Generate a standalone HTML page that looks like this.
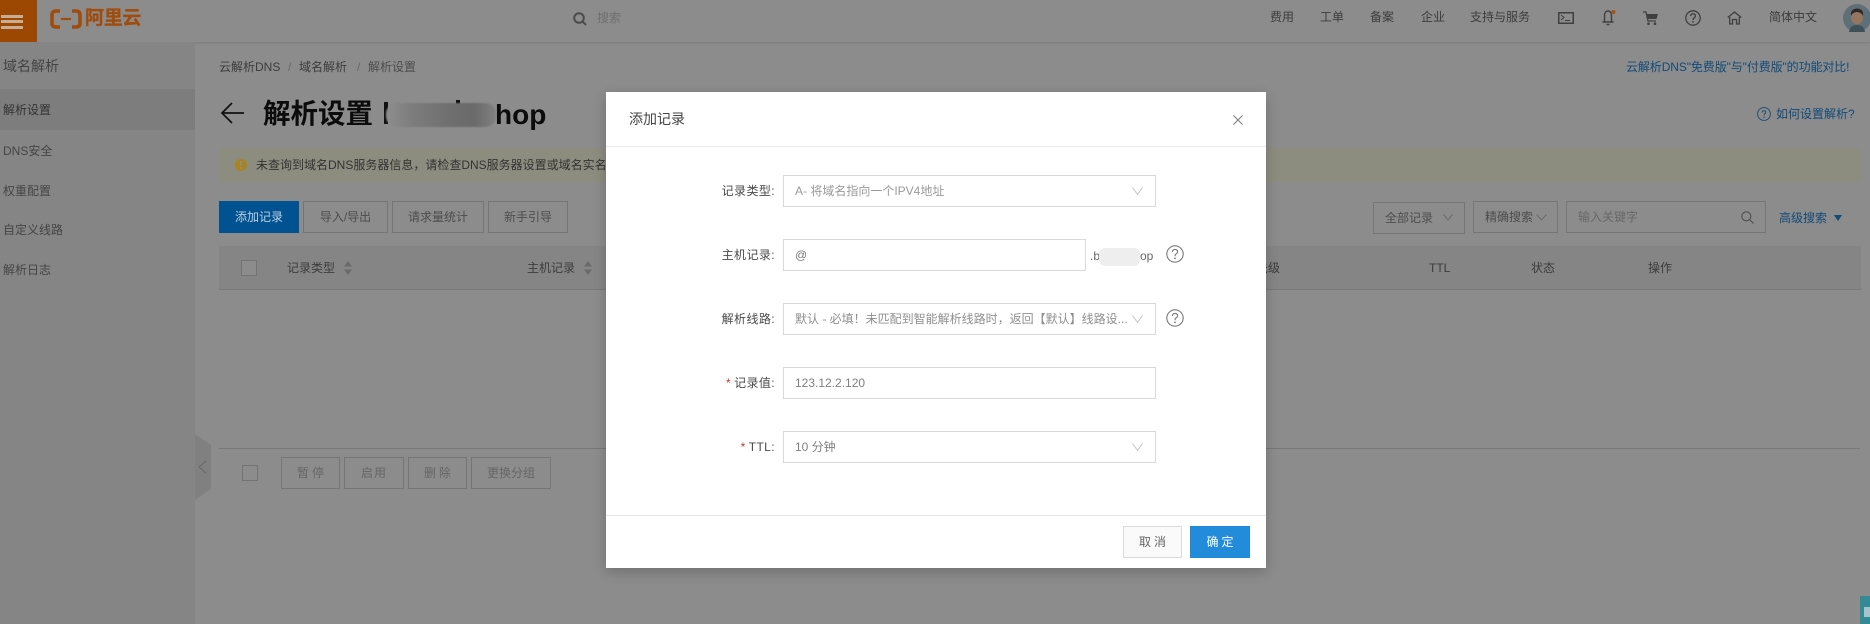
<!DOCTYPE html>
<html lang="zh">
<head>
<meta charset="utf-8">
<title>解析设置</title>
<style>
html,body{margin:0;padding:0;width:1870px;height:624px;overflow:hidden;background:#8c8c8c}
body{position:relative;font-family:"Liberation Sans","Noto Sans CJK SC",sans-serif;font-size:12px;color:#3c3c3c}
.a,.t,.b{position:absolute;box-sizing:border-box}
.t{white-space:nowrap;line-height:20px;height:20px}
.b{border:1px solid #757575;text-align:center;line-height:30px;height:32px;color:#4d4d4d;white-space:nowrap}
.f{position:absolute;box-sizing:border-box;height:32px;border:1px solid #d9d9d9;background:#fff;left:783px;width:373px;line-height:30px;padding-left:11px;color:#9a9a9a;white-space:nowrap;overflow:hidden}
.l{position:absolute;right:1095px;text-align:right;line-height:20px;height:20px;white-space:nowrap;color:#4a4a4a;letter-spacing:.4px}
.l i{font-style:normal;color:#c0392b;margin-right:3px}
svg{position:absolute;overflow:visible}
</style>
</head>
<body>
<!-- top bar -->
<div class="a" style="left:0;top:0;width:1870px;height:42px;background:#8c8c8c;box-shadow:0 1px 2px rgba(0,0,0,.1)"></div>
<div class="a" style="left:0;top:0;width:37px;height:42px;background:#9c4802"></div>
<div class="a" style="left:1px;top:15px;width:22px;height:3px;background:#c9ae96"></div>
<div class="a" style="left:1px;top:20px;width:22px;height:3px;background:#c9ae96"></div>
<div class="a" style="left:1px;top:26px;width:22px;height:3px;background:#c9ae96"></div>
<svg style="left:50px;top:9px" width="32" height="20" viewBox="0 0 32 20"><path d="M10 2H6Q2 2 2 6V14Q2 18 6 18H10M22 2H26Q30 2 30 6V14Q30 18 26 18H22" fill="none" stroke="#a04c0c" stroke-width="3.6"/><path d="M11 10H21" stroke="#a04c0c" stroke-width="2.2"/></svg>
<div class="t" style="left:85px;top:9px;font-size:19px;line-height:20px;font-weight:700;color:#a04c0c;letter-spacing:-.3px;-webkit-text-stroke:.3px #a04c0c">阿里云</div>
<svg style="left:573px;top:12px" width="14" height="14" viewBox="0 0 14 14"><circle cx="6" cy="6" r="4.8" fill="none" stroke="#4c4c4c" stroke-width="2"/><path d="M9.5 9.5L13 13" stroke="#4c4c4c" stroke-width="2"/></svg>
<div class="t" style="left:597px;top:8px;color:#6f6f6f">搜索</div>
<div class="t" style="left:1270px;top:7px">费用</div>
<div class="t" style="left:1320px;top:7px">工单</div>
<div class="t" style="left:1370px;top:7px">备案</div>
<div class="t" style="left:1421px;top:7px">企业</div>
<div class="t" style="left:1470px;top:7px">支持与服务</div>
<svg style="left:1558px;top:12px" width="16" height="12" viewBox="0 0 16 12"><rect x=".75" y=".75" width="14.5" height="10.5" fill="none" stroke="#3f3f3f" stroke-width="1.5"/><path d="M3 3L6 5.5L3 8M7 8.5H12" fill="none" stroke="#3f3f3f" stroke-width="1"/></svg>
<svg style="left:1602px;top:9px" width="14" height="17" viewBox="0 0 14 17"><path d="M2.5 12.5V7Q2.5 2 6 2Q9.5 2 9.5 7V12.5M.5 13H11.5" fill="none" stroke="#3f3f3f" stroke-width="1.4"/><path d="M4.5 15.5H7.5" stroke="#3f3f3f" stroke-width="1.4"/><circle cx="11.5" cy="3" r="2" fill="#a85210"/></svg>
<svg style="left:1643px;top:11px" width="16" height="15" viewBox="0 0 16 15"><path d="M0 1H3L5 10H13" fill="none" stroke="#3f3f3f" stroke-width="1.3"/><path d="M3.6 3H15L13.5 8H4.6Z" fill="#3f3f3f"/><circle cx="5.5" cy="12.7" r="1.3" fill="#3f3f3f"/><circle cx="12" cy="12.7" r="1.3" fill="#3f3f3f"/></svg>
<svg style="left:1685px;top:10px" width="16" height="16" viewBox="0 0 16 16"><circle cx="8" cy="8" r="7.2" fill="none" stroke="#3f3f3f" stroke-width="1.3"/><path d="M5.6 6.2Q5.8 3.9 8 3.9Q10.4 3.9 10.4 6Q10.4 7.2 9 8Q8 8.6 8 10" fill="none" stroke="#3f3f3f" stroke-width="1.3"/><circle cx="8" cy="11.9" r=".9" fill="#3f3f3f"/></svg>
<svg style="left:1727px;top:11px" width="15" height="14" viewBox="0 0 15 14"><path d="M.7 6.5L7.5 1L14.3 6.5M2.7 6V13H5.5V8.5H9.5V13H12.3V6" fill="none" stroke="#3f3f3f" stroke-width="1.3"/></svg>
<div class="t" style="left:1769px;top:7px">简体中文</div>
<svg style="left:1843px;top:4px" width="28" height="28" viewBox="0 0 28 28"><circle cx="14" cy="14" r="14" fill="#5f6f78"/><ellipse cx="14" cy="13" rx="6" ry="7.5" fill="#94755f"/><path d="M8 12Q7 5 14 4.5Q21 5 20 12Q18 8 14 8Q10 8 8 12Z" fill="#2e2a28"/><path d="M6 28Q7 21 14 21Q21 21 22 28Z" fill="#3f4f58"/></svg>

<!-- sidebar -->
<div class="a" style="left:0;top:42px;width:195px;height:582px;background:#858585"></div>
<div class="a" style="left:0;top:89px;width:195px;height:41px;background:#7d7d7d"></div>
<div class="t" style="left:3px;top:56px;font-size:14px;color:#444">域名解析</div>
<div class="t" style="left:3px;top:100px;color:#333">解析设置</div>
<div class="t" style="left:3px;top:141px;color:#454545">DNS安全</div>
<div class="t" style="left:3px;top:181px;color:#454545">权重配置</div>
<div class="t" style="left:3px;top:220px;color:#454545">自定义线路</div>
<div class="t" style="left:3px;top:260px;color:#454545">解析日志</div>
<svg style="left:195px;top:434px" width="16" height="66" viewBox="0 0 16 66"><path d="M0 0L16 11V55L0 66Z" fill="#808080"/><path d="M11 27L4 33L11 39" fill="none" stroke="#666" stroke-width="1"/></svg>

<!-- breadcrumb -->
<div class="t" style="left:219px;top:57px">云解析DNS</div>
<div class="t" style="left:288px;top:57px;color:#6a6a6a">/</div>
<div class="t" style="left:299px;top:57px">域名解析</div>
<div class="t" style="left:357px;top:57px;color:#6a6a6a">/</div>
<div class="t" style="left:368px;top:57px;color:#4d4d4d">解析设置</div>
<div class="t" style="left:1626px;top:57px;color:#124a78;letter-spacing:-.1px">云解析DNS"免费版"与"付费版"的功能对比!</div>

<!-- title -->
<svg style="left:220px;top:101px" width="25" height="24" viewBox="0 0 25 24"><path d="M12 2L2 12L12 22M2 12H24" fill="none" stroke="#111" stroke-width="1.7"/></svg>
<div class="t" style="left:263px;top:96px;height:36px;line-height:36px;font-size:27.5px;font-weight:700;color:#0c0c0c">解析设置</div>
<div class="a" style="left:384px;top:102px;width:4px;height:22px;background:#111"></div>
<div class="a" style="left:456px;top:100px;width:4px;height:6px;background:#111"></div>
<div class="a" style="left:386px;top:103px;width:110px;height:24px;border-radius:11px;background:linear-gradient(90deg,#8e8e8e 0%,#7c7c7c 25%,#6e6e6e 60%,#6a6a6a 80%,#808080 100%);filter:blur(.8px)"></div>
<div class="t" style="left:495px;top:97px;height:36px;line-height:36px;font-size:28px;font-weight:700;color:#0c0c0c">hop</div>
<svg style="left:1757px;top:107px" width="14" height="14" viewBox="0 0 14 14"><circle cx="7" cy="7" r="6.4" fill="none" stroke="#174a70" stroke-width=".9"/><path d="M5.2 5.4Q5.4 3.7 7 3.7Q8.8 3.7 8.8 5.2Q8.8 6.2 7.7 6.8Q7 7.3 7 8.5" fill="none" stroke="#174a70" stroke-width=".9"/><circle cx="7" cy="10.3" r=".7" fill="#174a70"/></svg>
<div class="t" style="left:1776px;top:104px;color:#124a78">如何设置解析?</div>

<!-- alert -->
<div class="a" style="left:219px;top:148px;width:1642px;height:34px;background:#8c8c7f"></div>
<div class="a" style="left:235px;top:159px;width:12px;height:12px;border-radius:50%;background:#a88420"></div>
<div class="a" style="left:240px;top:161px;width:2px;height:5px;background:#8c8c7f"></div>
<div class="a" style="left:240px;top:167px;width:2px;height:2px;background:#8c8c7f"></div>
<div class="t" style="left:256px;top:155px;color:#333">未查询到域名DNS服务器信息，请检查DNS服务器设置或域名实名认证信息</div>

<!-- actions -->
<div class="b" style="left:219px;top:201px;width:80px;background:#005291;border-color:#005291;color:#b9cfe0">添加记录</div>
<div class="b" style="left:303px;top:201px;width:85px">导入/导出</div>
<div class="b" style="left:392px;top:201px;width:92px">请求量统计</div>
<div class="b" style="left:488px;top:201px;width:80px">新手引导</div>

<div class="b" style="left:1373px;top:202px;width:92px;text-align:left;padding-left:11px;line-height:31px">全部记录</div>
<svg style="left:1443px;top:214px" width="10" height="7" viewBox="0 0 10 7"><path d="M.5 .5L5 6L9.5 .5" fill="none" stroke="#6a6a6a"/></svg>
<div class="b" style="left:1473px;top:201px;width:85px;text-align:left;padding-left:11px">精确搜索</div>
<svg style="left:1536px;top:214px" width="11" height="7" viewBox="0 0 11 7"><path d="M.5 .5L5.5 6L10.5 .5" fill="none" stroke="#6a6a6a"/></svg>
<div class="b" style="left:1566px;top:201px;width:200px;text-align:left;padding-left:11px;color:#686868">输入关键字</div>
<svg style="left:1741px;top:211px" width="13" height="13" viewBox="0 0 13 13"><circle cx="5.3" cy="5.3" r="4.5" fill="none" stroke="#4d4d4d" stroke-width="1.1"/><path d="M8.6 8.6L12.5 12.5" stroke="#4d4d4d" stroke-width="1.1"/></svg>
<div class="t" style="left:1779px;top:208px;color:#124a78">高级搜索</div>
<svg style="left:1834px;top:215px" width="8" height="6" viewBox="0 0 8 6"><path d="M0 0H8L4 6Z" fill="#124a78"/></svg>

<!-- table head -->
<div class="a" style="left:219px;top:246px;width:1642px;height:44px;background:#858585;border-bottom:1px solid #787878"></div>
<div class="a" style="left:241px;top:260px;width:16px;height:16px;border:1px solid #737373;background:#8c8c8c"></div>
<div class="t" style="left:287px;top:258px">记录类型</div>
<svg style="left:344px;top:261px" width="8" height="14" viewBox="0 0 8 14"><path d="M0 5.5L4 0L8 5.5ZM0 8.5H8L4 14Z" fill="#6a6a6a"/></svg>
<div class="t" style="left:527px;top:258px">主机记录</div>
<svg style="left:584px;top:261px" width="8" height="14" viewBox="0 0 8 14"><path d="M0 5.5L4 0L8 5.5ZM0 8.5H8L4 14Z" fill="#6a6a6a"/></svg>
<div class="t" style="left:1244px;top:258px">优先级</div>
<div class="t" style="left:1429px;top:258px">TTL</div>
<div class="t" style="left:1531px;top:258px">状态</div>
<div class="t" style="left:1648px;top:258px">操作</div>

<!-- table foot -->
<div class="a" style="left:219px;top:448px;width:1641px;height:1px;background:#787878"></div>
<div class="a" style="left:242px;top:465px;width:16px;height:16px;border:1px solid #737373;background:#8c8c8c"></div>
<div class="b" style="left:281px;top:457px;width:59px;color:#666;letter-spacing:3px;text-indent:3px">暂停</div>
<div class="b" style="left:344px;top:457px;width:60px;color:#666;letter-spacing:1px">启用</div>
<div class="b" style="left:408px;top:457px;width:59px;color:#666;letter-spacing:3px;text-indent:3px">删除</div>
<div class="b" style="left:471px;top:457px;width:80px;color:#666">更换分组</div>

<div class="a" style="left:1860px;top:596px;width:10px;height:28px;background:#338a95"></div>
<div class="a" style="left:1864px;top:607px;width:6px;height:10px;background:#a7c4c8"></div>

<!-- modal -->
<div class="a" style="left:606px;top:92px;width:660px;height:476px;background:#fff;box-shadow:0 4px 12px rgba(0,0,0,.2)">
</div>
<div class="t" style="left:629px;top:109px;font-size:14px;color:#444">添加记录</div>
<svg style="left:1233px;top:115px" width="10" height="10" viewBox="0 0 10 10"><path d="M.5 .5L9.5 9.5M9.5 .5L.5 9.5" stroke="#7a7a7a" fill="none"/></svg>
<div class="a" style="left:606px;top:146px;width:660px;height:1px;background:#e6eaea"></div>

<div class="l" style="top:181px">记录类型:</div>
<div class="f" style="top:175px">A- 将域名指向一个IPV4地址</div>
<svg style="left:1132px;top:187px" width="11" height="8" viewBox="0 0 11 8"><path d="M.5 .5L5.5 7.5L10.5 .5" fill="none" stroke="#c6c6c6"/></svg>

<div class="l" style="top:245px">主机记录:</div>
<div class="f" style="top:239px;width:303px;color:#777">@</div>
<div class="t" style="left:1090px;top:246px;color:#666">.b</div>
<div class="t" style="left:1140px;top:246px;color:#666">op</div>
<div class="a" style="left:1099px;top:248px;width:41px;height:18px;border-radius:6px;background:#eee"></div>
<svg style="left:1166px;top:245px" width="18" height="18" viewBox="0 0 18 18"><circle cx="9" cy="9" r="8.2" fill="none" stroke="#777" stroke-width="1.1"/><path d="M6.4 7Q6.6 4.4 9 4.4Q11.6 4.4 11.6 6.8Q11.6 8 10.2 8.8Q9 9.5 9 11.2" fill="none" stroke="#777" stroke-width="1.1"/><circle cx="9" cy="13.4" r=".9" fill="#777"/></svg>

<div class="l" style="top:309px">解析线路:</div>
<div class="f" style="top:303px;color:#8f8f8f">默认 - 必填！未匹配到智能解析线路时，返回【默认】线路设...</div>
<div class="a" style="left:1128px;top:304px;width:26px;height:30px;background:#fff"></div>
<svg style="left:1132px;top:315px" width="11" height="8" viewBox="0 0 11 8"><path d="M.5 .5L5.5 7.5L10.5 .5" fill="none" stroke="#c6c6c6"/></svg>
<svg style="left:1166px;top:309px" width="18" height="18" viewBox="0 0 18 18"><circle cx="9" cy="9" r="8.2" fill="none" stroke="#777" stroke-width="1.1"/><path d="M6.4 7Q6.6 4.4 9 4.4Q11.6 4.4 11.6 6.8Q11.6 8 10.2 8.8Q9 9.5 9 11.2" fill="none" stroke="#777" stroke-width="1.1"/><circle cx="9" cy="13.4" r=".9" fill="#777"/></svg>

<div class="l" style="top:373px"><i>*</i>记录值:</div>
<div class="f" style="top:367px;color:#808080">123.12.2.120</div>

<div class="l" style="top:437px"><i>*</i>TTL:</div>
<div class="f" style="top:431px;color:#808080">10 分钟</div>
<svg style="left:1132px;top:443px" width="11" height="8" viewBox="0 0 11 8"><path d="M.5 .5L5.5 7.5L10.5 .5" fill="none" stroke="#c6c6c6"/></svg>

<div class="a" style="left:606px;top:515px;width:660px;height:1px;background:#e6e6e6"></div>
<div class="b" style="left:1123px;top:526px;width:59px;background:#fafafa;border-color:#d9d9d9;color:#666;letter-spacing:3px;text-indent:3px">取消</div>
<div class="b" style="left:1190px;top:526px;width:60px;background:#228cdb;border-color:#228cdb;color:#fff;letter-spacing:3px;text-indent:3px">确定</div>
</body>
</html>
